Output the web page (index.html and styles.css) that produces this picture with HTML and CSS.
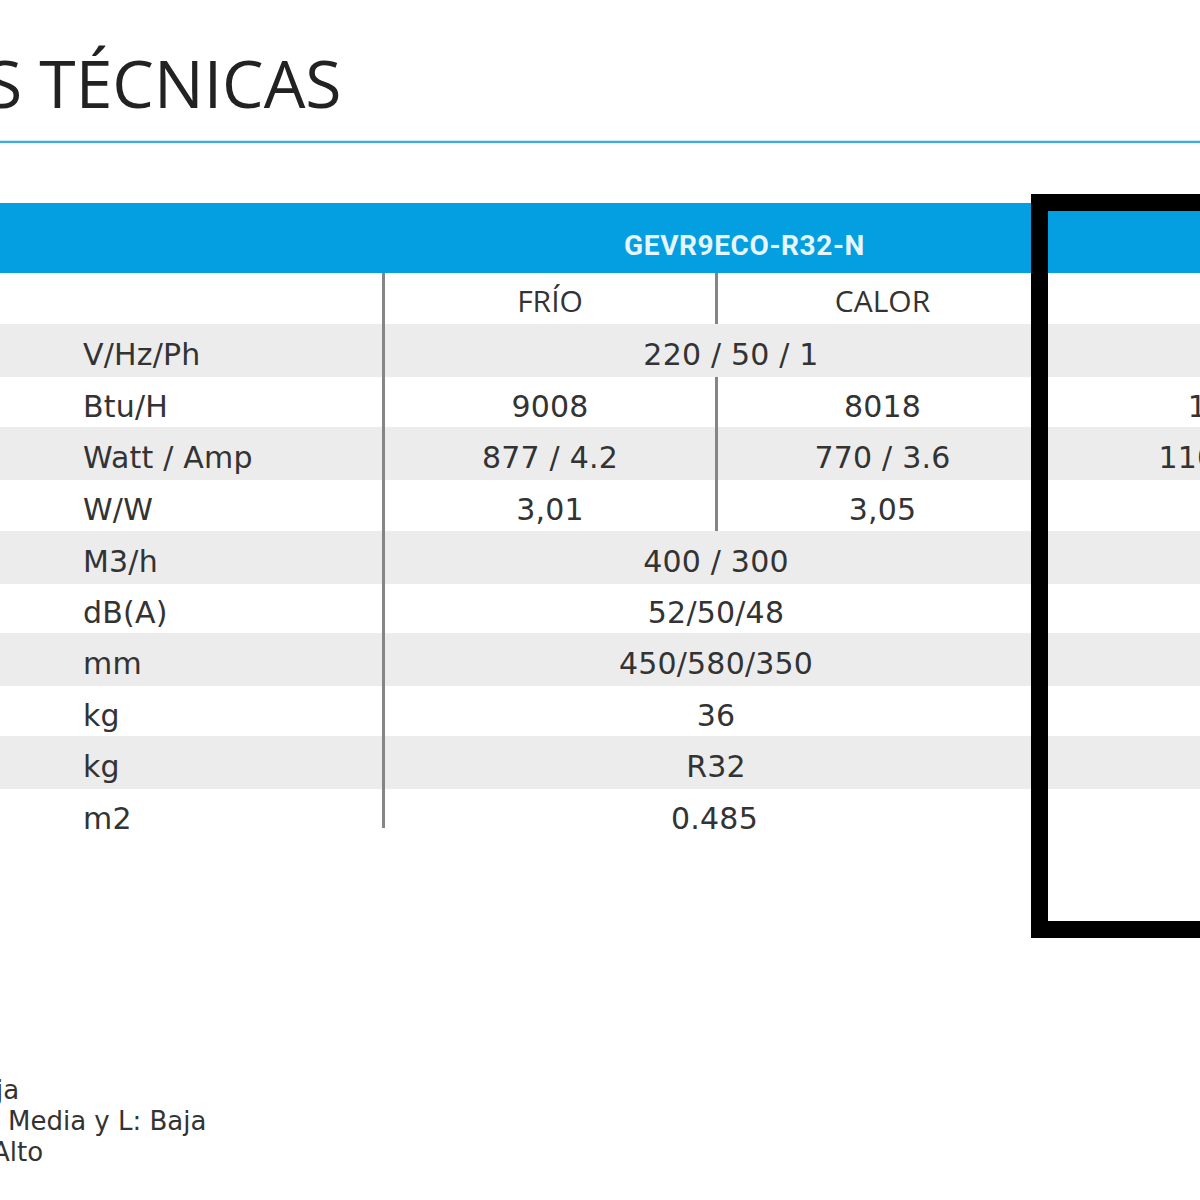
FILE: index.html
```html
<!DOCTYPE html>
<html lang="es">
<head>
<meta charset="utf-8">
<title>Características técnicas</title>
<link rel="stylesheet" href="styles.css">
</head>
<body>
<div class="page">
  <h1 class="title">S TÉCNICAS</h1>
  <div class="rule"></div>

  <div class="table">
    <div class="row head">
      <div class="c"></div>
      <div class="c span2 model">GEVR9ECO-R32-N</div>
      <div class="c"></div>
    </div>
    <div class="row sub">
      <div class="c"></div>
      <div class="c mode bl">FRÍO</div>
      <div class="c mode bl">CALOR</div>
      <div class="c"></div>
    </div>
    <div class="row g h53">
      <div class="c u">V/Hz/Ph</div>
      <div class="c span2 bl shift">220 / 50 / 1</div>
      <div class="c"></div>
    </div>
    <div class="row h50">
      <div class="c u">Btu/H</div>
      <div class="c bl">9008</div>
      <div class="c bl">8018</div>
      <div class="c m2">12000</div>
    </div>
    <div class="row g h53">
      <div class="c u">Watt / Amp</div>
      <div class="c bl">877 / 4.2</div>
      <div class="c bl">770 / 3.6</div>
      <div class="c m2">1100 / 5.0</div>
    </div>
    <div class="row h51">
      <div class="c u">W/W</div>
      <div class="c bl">3,01</div>
      <div class="c bl">3,05</div>
      <div class="c m2">3,21</div>
    </div>
    <div class="row g h53">
      <div class="c u">M3/h</div>
      <div class="c span2 bl">400 / 300</div>
      <div class="c"></div>
    </div>
    <div class="row h49">
      <div class="c u">dB(A)</div>
      <div class="c span2 bl">52/50/48</div>
      <div class="c"></div>
    </div>
    <div class="row g h53">
      <div class="c u">mm</div>
      <div class="c span2 bl">450/580/350</div>
      <div class="c"></div>
    </div>
    <div class="row h50">
      <div class="c u">kg</div>
      <div class="c span2 bl">36</div>
      <div class="c"></div>
    </div>
    <div class="row g h53">
      <div class="c u">kg</div>
      <div class="c span2 bl">R32</div>
      <div class="c"></div>
    </div>
    <div class="row h51">
      <div class="c u">m2</div>
      <div class="c span2 bl-short">0.485</div>
      <div class="c"></div>
    </div>
  </div>

  <div class="notes">
    <p class="n1">ja</p>
    <p class="n2">Media y L: Baja</p>
    <p class="n3">Alto</p>
  </div>

  <div class="highlight"></div>
</div>
</body>
</html>
```

FILE: styles.css
```css
html, body {
  margin: 0;
  padding: 0;
  overflow: hidden;
  background: #ffffff;
}

.page {
  position: relative;
  width: 1200px;
  height: 1200px;
  overflow: hidden;
  color: #333333;
  font-family: "DejaVu Sans", Verdana, sans-serif;
}

.title {
  margin: 49px 0 0 -14px;
  font-family: "Open Sans", "Noto Sans", sans-serif;
  font-weight: 400;
  font-size: 66px;
  line-height: 66px;
  color: #222222;
  white-space: nowrap;
}

.rule {
  margin-top: 26px;
  height: 2px;
  background: #3caedb;
  box-shadow: 0 -1px 0 #cbe9f5;
}

.table {
  margin-top: 60px;
  width: 1900px;
}

.row {
  display: grid;
  grid-template-columns: 382px 333px 332px 378px 475px;
  height: 51px;
}

.row.g { background: #ececec; }
.h49 { height: 49px; }
.h50 { height: 50px; }
.h51 { height: 51px; }
.h53 { height: 53px; }

.row.head {
  height: 70px;
  background: #049fe1;
}

.c {
  box-sizing: border-box;
  display: flex;
  align-items: center;
  justify-content: center;
  padding-top: 8px;
  font-size: 30px;
  letter-spacing: 0.2px;
  white-space: nowrap;
}

.span2 { grid-column: span 2; }

.u {
  justify-content: flex-start;
  padding-left: 83px;
}

.bl { border-left: 3px solid #858585; }

.bl-short {
  background: linear-gradient(#858585, #858585) left top / 3px 39px no-repeat;
}

.shift { padding-left: 30px; }

.model {
  padding-top: 14px;
  padding-left: 60px;
  font-family: Roboto, "Liberation Sans", sans-serif;
  font-weight: 700;
  font-size: 28px;
  letter-spacing: 0.6px;
  color: #e6f6fc;
}

.mode {
  font-family: "Open Sans", "Noto Sans", sans-serif;
  font-size: 30px;
  padding-top: 4px;
  letter-spacing: 0;
}

.notes {
  margin-top: 235px;
  font-size: 26px;
  line-height: 31px;
}

.notes p {
  margin: 0;
  white-space: nowrap;
}

.n1 { margin-left: -4px !important; }
.n2 { padding-left: 8px; }
.n3 { margin-left: -8px !important; }

.highlight {
  position: absolute;
  left: 1031px;
  top: 194px;
  width: 400px;
  height: 710px;
  border: 17px solid #000000;
}
```
